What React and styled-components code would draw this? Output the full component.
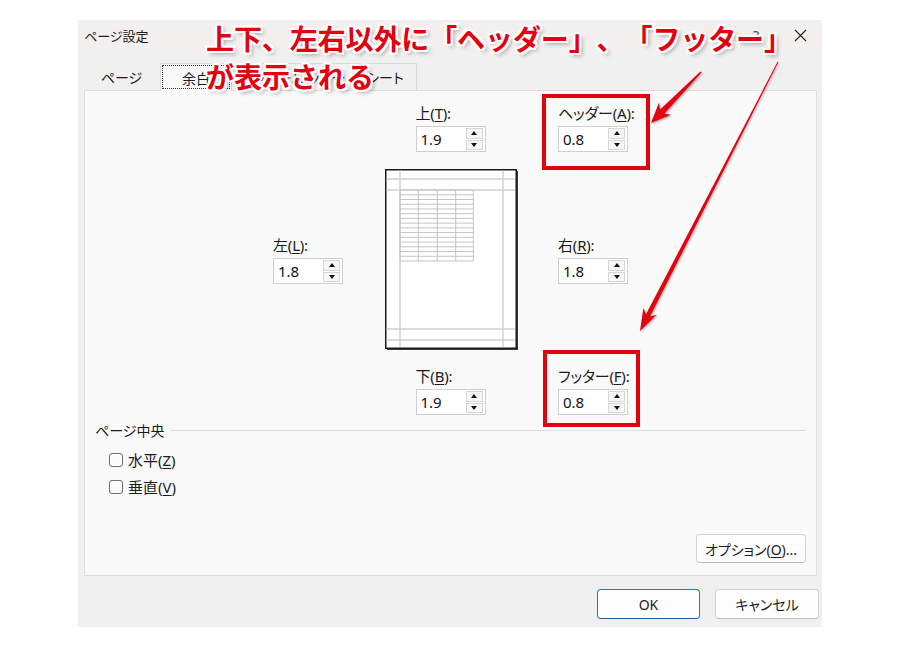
import React from 'react';
import styled, { createGlobalStyle } from 'styled-components';

const UI = `"Segoe UI", "Noto Sans", "Noto Sans CJK JP", sans-serif`;
const RED = '#e3000f';

const Global = createGlobalStyle`
  html, body { margin: 0; padding: 0; background: #fff; }
  body { font-family: ${UI}; color: #1b1b1b; }
  * { box-sizing: border-box; }
`;

const Screen = styled.div`
  position: relative;
  width: 924px;
  height: 647px;
  overflow: hidden;
  background: #fff;
  padding: 20px 0 0 78px;
`;

const Dialog = styled.div`
  width: 744px;
  height: 607px;
  background: #f0f0f0;
  display: flex;
  flex-direction: column;
  font-feature-settings: "palt";
  font-size: 14px;
`;

const TitleBar = styled.div`
  height: 30px;
  background: #f4efef;
  display: flex;
  align-items: center;
  padding-left: 6px;
`;

const Title = styled.div`
  flex: 1;
  font-size: 13px;
  color: #1b1b1b;
`;

const CaptionButton = styled.div`
  width: 44px;
  height: 30px;
  display: flex;
  align-items: center;
  justify-content: center;
  color: #555;
  font-size: 15px;
`;

const TabStrip = styled.div`
  display: flex;
  align-items: flex-end;
  height: 40px;
  padding-left: 6px;
`;

const Tab = styled.div`
  position: relative;
  width: ${p => p.$w}px;
  height: ${p => (p.$active ? 28 : 27)}px;
  display: flex;
  align-items: center;
  justify-content: center;
  font-size: 14px;
  color: #1b1b1b;
  margin-bottom: ${p => (p.$active ? -1 : 0)}px;
  border-top: 1px solid ${p => (p.$plain ? 'transparent' : '#d9d9d9')};
  border-right: 1px solid ${p => (p.$plain ? 'transparent' : '#d9d9d9')};
  border-left: ${p => (p.$active ? '1px solid #d9d9d9' : 'none')};
  background: ${p => (p.$active ? '#f9f9f9' : 'transparent')};
  z-index: ${p => (p.$active ? 1 : 0)};
  &::before {
    content: '';
    display: ${p => (p.$active ? 'block' : 'none')};
    position: absolute;
    inset: 1px 1px 2px 1px;
    border: 1px dotted #333;
  }
`;

const Panel = styled.div`
  margin: 0 5px 0 6px;
  height: 486px;
  background: #f9f9f9;
  border: 1px solid #dedede;
  display: flex;
  flex-direction: column;
`;

const MarginGrid = styled.div`
  display: grid;
  grid-template-columns: 188px 112px 131px 42px 1fr;
  grid-template-rows: 78px 181px 70px;
`;

const Cell = styled.div`
  grid-column: ${p => p.$col};
  grid-row: ${p => p.$row};
  justify-self: ${p => p.$jx || 'start'};
  align-self: ${p => p.$ay || 'center'};
  margin-top: ${p => p.$mt || 0}px;
  margin-bottom: ${p => p.$mb || 0}px;
`;

const Marked = styled.div`
  position: relative;
  &::after {
    content: '';
    position: absolute;
    left: ${p => -p.$l}px;
    top: ${p => -p.$t}px;
    right: ${p => -p.$r}px;
    bottom: ${p => -p.$b}px;
    border: 4px solid ${RED};
    pointer-events: none;
  }
`;

const FieldBox = styled.div`
  display: flex;
  flex-direction: column;
  gap: 3px;
`;

const Label = styled.div`
  font-size: 15px;
  line-height: 20px;
  color: #1b1b1b;
  white-space: nowrap;
  letter-spacing: -0.2px;
`;

const Key = styled.span`
  text-decoration: underline;
  text-underline-offset: 2px;
`;

const Spin = styled.div`
  display: flex;
  width: 70px;
  height: 26px;
  border: 1px solid #cfcfcf;
  background: #fff;
`;

const SpinValue = styled.div`
  flex: 1;
  padding-left: 4px;
  font-size: 15px;
  line-height: 24px;
  color: #111;
`;

const SpinButtons = styled.div`
  width: 19px;
  display: flex;
  flex-direction: column;
  gap: 1px;
  padding: 1px 2px 1px 0;
`;

const SpinButton = styled.div`
  flex: 1;
  border: 1px solid #d6d6d6;
  background: #f6f6f6;
  display: flex;
  align-items: center;
  justify-content: center;
  &::before {
    content: '';
    width: 0;
    height: 0;
    border-left: 3.5px solid transparent;
    border-right: 3.5px solid transparent;
    ${p => (p.$down ? 'border-top: 4px solid #111;' : 'border-bottom: 4px solid #111;')}
  }
`;

const GroupHeader = styled.div`
  display: flex;
  align-items: center;
  height: 20px;
  padding: 0 10px;
  font-size: 14px;
  &::after {
    content: '';
    flex: 1;
    height: 1px;
    margin-left: 6px;
    background: #dcdcdc;
  }
`;

const CheckList = styled.div`
  display: flex;
  flex-direction: column;
  padding: 6px 0 0 24px;
`;

const CheckRow = styled.label`
  display: flex;
  align-items: center;
  gap: 5px;
  height: 27px;
  font-size: 15px;
`;

const Box = styled.span`
  width: 14px;
  height: 14px;
  border: 1px solid #6f6f6f;
  border-radius: 3px;
  background: #fbfbfb;
`;

const OptionRow = styled.div`
  margin-top: auto;
  display: flex;
  justify-content: flex-end;
  padding: 0 10px 12px 0;
`;

const Button = styled.div`
  width: ${p => p.$w}px;
  height: ${p => p.$h || 30}px;
  display: flex;
  align-items: center;
  justify-content: center;
  background: #fdfdfd;
  border: 1px solid ${p => (p.$primary ? '#2a74c4' : '#d3d3d3')};
  border-bottom-color: ${p => (p.$primary ? '#1c5fa8' : '#bdbdbd')};
  border-radius: 4px;
  font-size: 14px;
  color: #1b1b1b;
`;

const Footer = styled.div`
  display: flex;
  justify-content: flex-end;
  gap: 15px;
  padding: 13px 3px 0 0;
`;

const Callout = styled.div`
  position: absolute;
  z-index: 10;
  left: 206px;
  top: 19px;
  display: flex;
  flex-direction: column;
  font-family: "Noto Sans CJK JP", sans-serif;
  font-weight: 700;
  font-size: 28px;
  line-height: 38px;
  color: ${RED};
  white-space: nowrap;
  font-kerning: none;
  text-spacing-trim: space-all;
  text-shadow:
    2px 0 #fff, -2px 0 #fff, 0 2px #fff, 0 -2px #fff,
    2px 2px #fff, -2px -2px #fff, 2px -2px #fff, -2px 2px #fff,
    3px 3px 4px rgba(0, 0, 0, 0.35);
`;

const CalloutLine = styled.span`
  letter-spacing: ${p => p.$ls || 0}px;
`;

const ArrowLayer = styled.svg`
  position: absolute;
  z-index: 11;
  left: 0;
  top: 0;
  pointer-events: none;
  filter: drop-shadow(1px 1px 1px rgba(0, 0, 0, 0.35));
`;

function arrowPoints(x1, y1, x2, y2, w1, w2, hl, hw) {
  const dx = x2 - x1;
  const dy = y2 - y1;
  const L = Math.hypot(dx, dy);
  const ux = dx / L;
  const uy = dy / L;
  const nx = -uy;
  const ny = ux;
  const bx = x2 - ux * hl;
  const by = y2 - uy * hl;
  const mx = x2 - ux * hl * 0.8;
  const my = y2 - uy * hl * 0.8;
  const pts = [
    [x1 + (nx * w1) / 2, y1 + (ny * w1) / 2],
    [mx + (nx * w2) / 2, my + (ny * w2) / 2],
    [bx + (nx * hw) / 2, by + (ny * hw) / 2],
    [x2, y2],
    [bx - (nx * hw) / 2, by - (ny * hw) / 2],
    [mx - (nx * w2) / 2, my - (ny * w2) / 2],
    [x1 - (nx * w1) / 2, y1 - (ny * w1) / 2],
  ];
  return pts.map(p => p.map(v => v.toFixed(1)).join(',')).join(' ');
}

function Field({ label, k, tail, value }) {
  return (
    <FieldBox>
      <Label>
        {label}(<Key>{k}</Key>){tail}
      </Label>
      <Spin>
        <SpinValue>{value}</SpinValue>
        <SpinButtons>
          <SpinButton />
          <SpinButton $down />
        </SpinButtons>
      </Spin>
    </FieldBox>
  );
}

function PagePreview() {
  const cols = [15, 33.3, 52.3, 70.7, 88.3];
  const rows = [];
  for (let i = 0; i <= 15; i++) rows.push(21 + (i * 71) / 15);
  return (
    <svg width="133" height="181" viewBox="0 0 133 181">
      <rect x="2" y="2" width="131" height="179" fill="#3a3a3a" />
      <rect x="0.75" y="0.75" width="130.5" height="178.5" fill="#fff" stroke="#1a1a1a" strokeWidth="1.5" />
      <g stroke="#cfcfcf" strokeWidth="1.4">
        <line x1="15" y1="1.5" x2="15" y2="178" />
        <line x1="118" y1="1.5" x2="118" y2="178" />
        <line x1="1.5" y1="10" x2="130" y2="10" />
        <line x1="1.5" y1="21" x2="130" y2="21" />
        <line x1="1.5" y1="160" x2="130" y2="160" />
        <line x1="1.5" y1="171" x2="130" y2="171" />
      </g>
      <g stroke="#c4c4c4" strokeWidth="1">
        {rows.map((y, i) => (
          <line key={'r' + i} x1="15" y1={y} x2="88.3" y2={y} />
        ))}
        {cols.map((x, i) => (
          <line key={'c' + i} x1={x} y1="21" x2={x} y2="92" />
        ))}
      </g>
    </svg>
  );
}

export default function App() {
  return (
    <Screen>
      <Global />
      <Dialog>
        <TitleBar>
          <Title>ページ設定</Title>
          <CaptionButton>?</CaptionButton>
          <CaptionButton>
            <svg width="13" height="13" viewBox="0 0 13 13">
              <path d="M1 1 L12 12 M12 1 L1 12" stroke="#222" strokeWidth="1.1" />
            </svg>
          </CaptionButton>
        </TitleBar>
        <TabStrip>
          <Tab $w={76} $plain>ページ</Tab>
          <Tab $w={72} $active>余白</Tab>
          <Tab $w={122}>ヘッダー/フッター</Tab>
          <Tab $w={63}>シート</Tab>
        </TabStrip>
        <Panel>
          <MarginGrid>
            <Cell $col={3} $row={1} $jx="center" $ay="end" $mb={17}>
              <Field label="上" k="T" tail=":" value="1.9" />
            </Cell>
            <Cell $col={5} $row={1} $ay="end" $mb={17}>
              <Marked $l={16} $t={9} $r={15} $b={18}>
                <Field label="ヘッダー" k="A" tail=":" value="0.8" />
              </Marked>
            </Cell>
            <Cell $col={2} $row={2}>
              <Field label="左" k="L" tail=":" value="1.8" />
            </Cell>
            <Cell $col={3} $row={2} $ay="start">
              <PagePreview />
            </Cell>
            <Cell $col={5} $row={2}>
              <Field label="右" k="R" tail=":" value="1.8" />
            </Cell>
            <Cell $col={3} $row={3} $jx="center" $ay="start" $mt={16}>
              <Field label="下" k="B" tail=":" value="1.9" />
            </Cell>
            <Cell $col={5} $row={3} $ay="start" $mt={16}>
              <Marked $l={15} $t={16} $r={11} $b={12}>
                <Field label="フッター" k="F" tail=":" value="0.8" />
              </Marked>
            </Cell>
          </MarginGrid>
          <GroupHeader>ページ中央</GroupHeader>
          <CheckList>
            <CheckRow>
              <Box />
              <span>水平(<Key>Z</Key>)</span>
            </CheckRow>
            <CheckRow>
              <Box />
              <span>垂直(<Key>V</Key>)</span>
            </CheckRow>
          </CheckList>
          <OptionRow>
            <Button $w={110} $h={29}>
              <span>オプション(<Key>O</Key>)...</span>
            </Button>
          </OptionRow>
        </Panel>
        <Footer>
          <Button $w={103} $primary>OK</Button>
          <Button $w={104}>キャンセル</Button>
        </Footer>
      </Dialog>
      <Callout>
        <CalloutLine $ls={-0.1}>上下、左右以外に「ヘッダー」、「フッター」</CalloutLine>
        <CalloutLine>が表示される</CalloutLine>
      </Callout>
      <ArrowLayer width="924" height="647">
        <polygon points={arrowPoints(701, 72, 651, 123, 1.5, 6, 20, 17)} fill={RED} />
        <polygon points={arrowPoints(778, 62, 640, 331, 1, 4.5, 22, 15)} fill={RED} />
      </ArrowLayer>
    </Screen>
  );
}
